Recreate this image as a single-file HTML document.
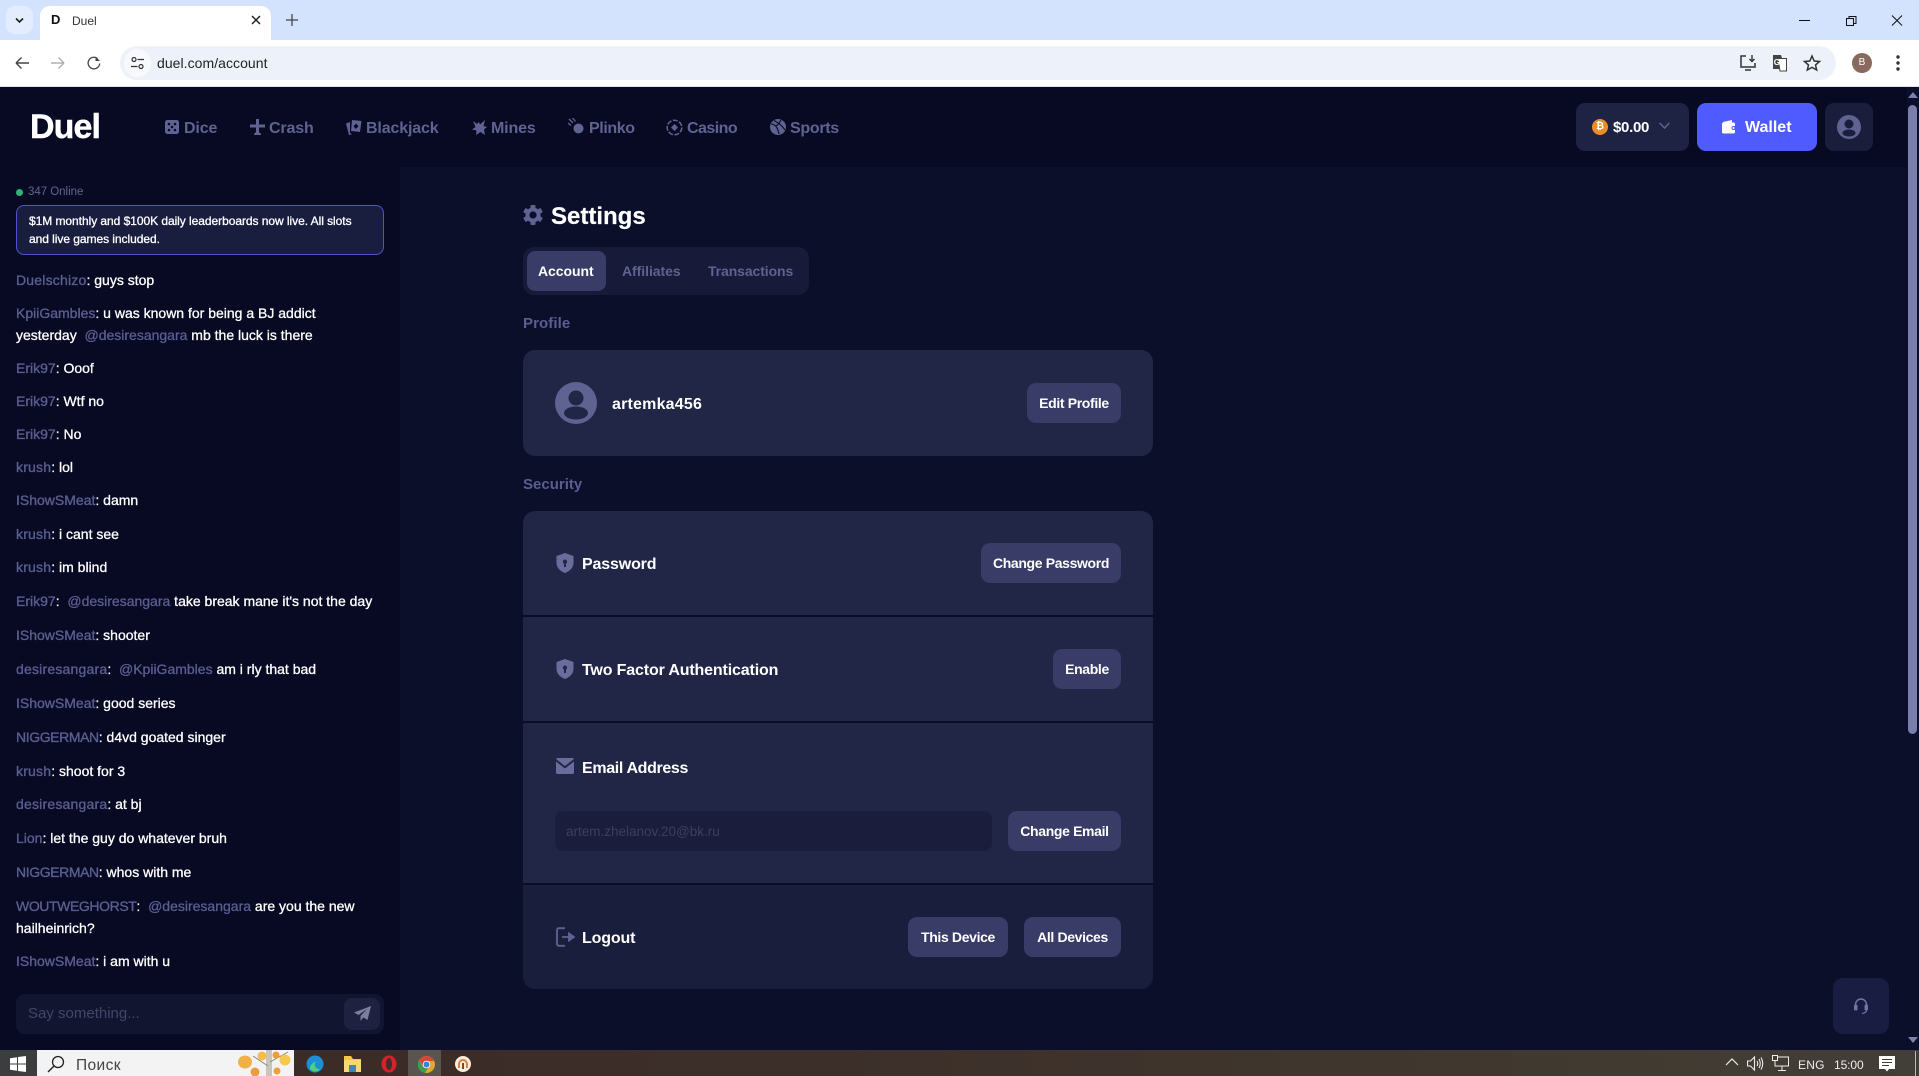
<!DOCTYPE html>
<html lang="en"><head><meta charset="utf-8"><title>Duel</title>
<style>
html,body{margin:0;padding:0;width:1919px;height:1076px;overflow:hidden;background:#070a22;font-family:"Liberation Sans","Noto Sans CJK SC",sans-serif}
div,span.a,svg.a{position:absolute}
.t{position:absolute;white-space:nowrap;line-height:20px;height:20px}
.n{font-size:16px;font-weight:700;color:#5f6391;top:119px;letter-spacing:-.15px}
.b{position:absolute;background:#383c66;border-radius:9px;color:#fff;font-size:14px;font-weight:700;height:40px;line-height:40px;text-align:center;white-space:nowrap;letter-spacing:-.35px}
.l{font-size:16px;font-weight:700;color:#fff;letter-spacing:-.15px}
.m{position:absolute;left:16px;font-size:14px;line-height:20px;color:#fff;white-space:nowrap;font-weight:400;-webkit-text-stroke:.3px #fff}
.m b{font-weight:400;color:#5a5e90;-webkit-text-stroke:.35px #5a5e90}
.m b.u{letter-spacing:-.4px}
.m b.w{letter-spacing:.2px}
.m i{font-style:normal;color:#5a5e90;-webkit-text-stroke:.3px #5a5e90}
</style></head><body>

<!-- browser chrome -->
<div style="left:0;top:0;width:1919px;height:40px;background:#d3e3fd"></div>
<div style="left:6px;top:6px;width:27px;height:28px;background:#e3edfd;border-radius:9px"></div>
<svg class="a" style="left:14px;top:15px" width="11" height="11" viewBox="0 0 11 11"><path d="M2 3.500 5.500 7 9 3.500" fill="none" stroke="#1f1f1f" stroke-width="1.600"/></svg>
<div style="left:40px;top:6px;width:231px;height:36px;background:#fff;border-radius:10px 10px 0 0"></div>
<div class="t" style="left:51px;top:10px;font-size:13px;font-weight:700;color:#111">D</div>
<div class="t" style="left:72px;top:11px;font-size:12px;color:#333">Duel</div>
<svg class="a" style="left:251px;top:15px" width="10" height="10" viewBox="0 0 10 10"><path d="M1 1 9 9M9 1 1 9" stroke="#222" stroke-width="1.500"/></svg>
<svg class="a" style="left:286px;top:14px" width="12" height="12" viewBox="0 0 12 12"><path d="M6 0V12M0 6H12" stroke="#444" stroke-width="1.300"/></svg>
<svg class="a" style="left:1799px;top:15px" width="112" height="12" viewBox="0 0 112 12"><path d="M0 5.500H11" stroke="#111" stroke-width="1"/><path d="M47.500 3.500h7v7h-7zM50 3.500V1.500h7v7h-2.500" fill="none" stroke="#111" stroke-width="1"/><path d="M93 .5 103 10.500M103 .5 93 10.500" stroke="#111" stroke-width="1"/></svg>

<div style="left:0;top:40px;width:1919px;height:47px;background:#fff;border-bottom:1px solid #dfe3ea;box-sizing:border-box"></div>
<div style="left:120px;top:46px;width:1716px;height:34px;background:#edf2fa;border-radius:17px"></div>
<div style="left:124px;top:49px;width:27px;height:28px;background:#f7f9fd;border-radius:14px"></div>
<svg class="a" style="left:14px;top:55px" width="92" height="16" viewBox="0 0 92 16"><path d="M2 8H15M2 8 7.500 2.500M2 8 7.500 13.500" fill="none" stroke="#444" stroke-width="1.400"/><path d="M37 8H50M50 8 44.500 2.500M50 8 44.500 13.500" fill="none" stroke="#b0b0b0" stroke-width="1.400"/><path d="M83.500 3.500a5.800 5.800 0 1 0 2.200 5" fill="none" stroke="#444" stroke-width="1.300"/><path d="M81.500 1.500v4.500h4.500z" fill="#444"/></svg>
<svg class="a" style="left:131px;top:56px" width="13" height="14" viewBox="0 0 13 14"><circle cx="3" cy="3.500" r="2" fill="none" stroke="#333" stroke-width="1.200"/><path d="M6.500 3.500H13M0 10.500H6.500" stroke="#333" stroke-width="1.200"/><circle cx="10" cy="10.500" r="2" fill="none" stroke="#333" stroke-width="1.200"/></svg>
<div class="t" style="left:157px;top:53px;font-size:14px;color:#222;letter-spacing:.05px">duel.com/account</div>
<svg class="a" style="left:1740px;top:54px" width="82" height="18" viewBox="0 0 82 18"><path d="M6 2H1v11h14V9M5 16h6" fill="none" stroke="#333" stroke-width="1.500"/><path d="M12 1v6M9.500 5 12 7.500 14.500 5" fill="none" stroke="#333" stroke-width="1.400"/><path d="M33 1h8l1 3v11H33z" fill="#444"/><path d="M38 4.500h8.500V17H40z" fill="#fff" stroke="#444"/><text x="33.800" y="11" font-size="8" font-family="Liberation Sans" font-weight="700" fill="#fff">G</text><path d="M72 2 74.200 7 79.500 7.500 75.500 11 76.700 16 72 13.400 67.300 16 68.500 11 64.500 7.500 69.800 7z" fill="none" stroke="#333" stroke-width="1.500"/></svg>
<div style="left:1852px;top:53px;width:20px;height:20px;border-radius:10px;background:#8a6a5f;color:#fff;font-size:10px;line-height:20px;text-align:center">B</div>
<svg class="a" style="left:1896px;top:55px" width="4" height="16" viewBox="0 0 4 16"><circle cx="2" cy="2" r="1.700" fill="#333"/><circle cx="2" cy="8" r="1.700" fill="#333"/><circle cx="2" cy="14" r="1.700" fill="#333"/></svg>

<!-- app backgrounds -->
<div style="left:0;top:87px;width:1919px;height:963px;background:#070a22"></div>
<div style="left:400px;top:167px;width:1507px;height:883px;background:#0b0f2a"></div>
<!-- scrollbar -->
<div style="left:1907px;top:87px;width:12px;height:963px;background:#0b0f2a"></div>
<svg class="a" style="left:1908px;top:92px" width="10" height="6" viewBox="0 0 10 6"><path d="M0 6 5 0 10 6z" fill="#7d80ad"/></svg>
<div style="left:1908px;top:105px;width:9px;height:629px;background:#7a7eab;border-radius:5px"></div>
<svg class="a" style="left:1908px;top:1037px" width="10" height="6" viewBox="0 0 10 6"><path d="M0 0 5 6 10 0z" fill="#7d80ad"/></svg>

<!-- header -->
<div class="t" style="left:30px;top:107px;height:40px;line-height:40px;font-size:34px;font-weight:700;color:#fff;letter-spacing:-.9px;-webkit-text-stroke:.4px #fff">Duel</div>
<svg class="a" style="left:165px;top:120px" width="14" height="14" viewBox="0 0 14 14"><rect width="14" height="14" rx="2.500" fill="#5f6391"/><g fill="#070a22"><circle cx="4" cy="4" r="1.300"/><circle cx="10" cy="4" r="1.300"/><circle cx="7" cy="7" r="1.300"/><circle cx="4" cy="10" r="1.300"/><circle cx="10" cy="10" r="1.300"/></g></svg>
<div class="t n" style="left:184px">Dice</div>
<svg class="a" style="left:250px;top:119px" width="15" height="16" viewBox="0 0 15 16"><path d="M6 0h3v5.500h6V8.500H9V13l2 2v1H4v-1l2-2V8.500H0V5.500h6z" fill="#5f6391"/></svg>
<div class="t n" style="left:269px">Crash</div>
<svg class="a" style="left:346px;top:119px" width="16" height="16" viewBox="0 0 16 16"><path d="M0 4.500 4 3v11l2 1.500-3 .5z" fill="#5f6391"/><path d="M6 1 15.500 2 14 13 5 12z" fill="#5f6391"/><path d="M10.300 4.500 12.500 7.500 9.500 10 7.500 7z" fill="#070a22"/></svg>
<div class="t n" style="left:366px">Blackjack</div>
<svg class="a" style="left:472px;top:120px" width="15" height="15" viewBox="0 0 15 15"><path d="M1 1 5 4 7 2 8 4.500 13 0 11.500 6 15 7 12 9.500 13 15 8.500 12 4 15 4.500 10.500 0 9.500 3.500 7z" fill="#5f6391"/></svg>
<div class="t n" style="left:491px">Mines</div>
<svg class="a" style="left:568px;top:118px" width="16" height="16" viewBox="0 0 16 16"><circle cx="10.500" cy="10.500" r="5" fill="#5f6391"/><path d="M1 1 5 5M4.500 0 7.500 3.500M0 5 3 7.500" stroke="#5f6391" stroke-width="1.300"/></svg>
<div class="t n" style="left:589px;letter-spacing:-.4px">Plinko</div>
<svg class="a" style="left:666px;top:119px" width="17" height="17" viewBox="0 0 17 17"><circle cx="8.500" cy="8.500" r="7.300" fill="none" stroke="#5f6391" stroke-width="1.500" stroke-dasharray="5 1.500"/><path d="M8.500 5 12 8.500 8.500 12 5 8.500z" fill="#5f6391"/></svg>
<div class="t n" style="left:687px;letter-spacing:-.55px">Casino</div>
<svg class="a" style="left:770px;top:119px" width="16" height="16" viewBox="0 0 16 16"><circle cx="8" cy="8" r="8" fill="#5f6391"/><path d="M1 5Q7 5 9 15M4 1.500Q11 5 15 11M11 1Q9 5 6 7" fill="none" stroke="#070a22" stroke-width="1.100"/></svg>
<div class="t n" style="left:790px;letter-spacing:-.3px">Sports</div>

<div style="left:1576px;top:103px;width:113px;height:48px;background:#1f2343;border-radius:9px"></div>
<div style="left:1592px;top:119px;width:16px;height:16px;border-radius:8px;background:#e88d2a;color:#fff;font-size:10px;line-height:16px;text-align:center;font-weight:700">₿</div>
<div class="t" style="left:1613px;top:118px;font-size:15px;font-weight:700;color:#fff;letter-spacing:-.3px">$0.00</div>
<svg class="a" style="left:1659px;top:122px" width="11" height="8" viewBox="0 0 11 8"><path d="M.7 1 5.500 6 10.300 1" fill="none" stroke="#5f6391" stroke-width="1.500"/></svg>
<div style="left:1697px;top:103px;width:120px;height:48px;background:#4f5bff;border-radius:9px"></div>
<svg class="a" style="left:1721px;top:120px" width="16" height="14" viewBox="0 0 16 14"><path d="M2 2 11 0v2.500H2z" fill="#fff"/><rect x="1" y="2.500" width="13" height="11" rx="1.500" fill="#fff"/><rect x="10.500" y="6" width="5.500" height="4" rx="2" fill="#4f5bff"/><circle cx="12.500" cy="8" r="1" fill="#fff"/></svg>
<div class="t" style="left:1745px;top:118px;font-size:16px;font-weight:700;color:#fff">Wallet</div>
<div style="left:1825px;top:103px;width:48px;height:48px;background:#1a1e3c;border-radius:9px"></div>
<svg class="a" style="left:1837px;top:115px" width="24" height="24" viewBox="0 0 24 24"><circle cx="12" cy="12" r="12" fill="#5f6391"/><circle cx="12" cy="9" r="4.500" fill="#1a1e3c"/><ellipse cx="12" cy="18" rx="6.500" ry="3.500" fill="#1a1e3c"/></svg>

<!-- chat -->
<div style="left:16px;top:188.500px;width:7px;height:7px;border-radius:4px;background:#2fb37a"></div>
<div class="t" style="left:28px;top:182px;font-size:11.500px;color:#62668f;letter-spacing:-.03px">347 Online</div>
<div style="left:16px;top:205px;width:368px;height:50px;box-sizing:border-box;background:#1a1e3e;border:1px solid #4c55cf;border-radius:8px"></div>
<div class="t" style="left:29px;top:211px;font-size:12px;color:#fff;-webkit-text-stroke:.3px #fff;letter-spacing:-.05px">$1M monthly and $100K daily leaderboards now live. All slots</div>
<div class="t" style="left:29px;top:229px;font-size:12px;color:#fff;-webkit-text-stroke:.3px #fff;letter-spacing:-.05px">and live games included.</div>

<div class="m" style="top:270px"><b class="w">Duelschizo</b>: guys stop</div>
<div class="m" style="top:303px"><b>KpiiGambles</b>: u was known for being a BJ addict</div>
<div class="m" style="top:325px">yesterday &nbsp;<i>@desiresangara</i> mb the luck is there</div>
<div class="m" style="top:358px"><b>Erik97</b>: Ooof</div>
<div class="m" style="top:391px"><b>Erik97</b>: Wtf no</div>
<div class="m" style="top:424px"><b>Erik97</b>: No</div>
<div class="m" style="top:457px"><b class="w">krush</b>: lol</div>
<div class="m" style="top:490px"><b>IShowSMeat</b>: damn</div>
<div class="m" style="top:524px"><b class="w">krush</b>: i cant see</div>
<div class="m" style="top:557px"><b class="w">krush</b>: im blind</div>
<div class="m" style="top:591px"><b>Erik97</b>: &nbsp;<i>@desiresangara</i> take break mane it's not the day</div>
<div class="m" style="top:625px"><b>IShowSMeat</b>: shooter</div>
<div class="m" style="top:659px"><b class="w">desiresangara</b>: &nbsp;<i>@KpiiGambles</i> am i rly that bad</div>
<div class="m" style="top:693px"><b>IShowSMeat</b>: good series</div>
<div class="m" style="top:727px"><b class="u">NIGGERMAN</b>: d4vd goated singer</div>
<div class="m" style="top:761px"><b class="w">krush</b>: shoot for 3</div>
<div class="m" style="top:794px"><b class="w">desiresangara</b>: at bj</div>
<div class="m" style="top:828px"><b>Lion</b>: let the guy do whatever bruh</div>
<div class="m" style="top:862px"><b class="u">NIGGERMAN</b>: whos with me</div>
<div class="m" style="top:896px"><b class="u">WOUTWEGHORST</b>: &nbsp;<i>@desiresangara</i> are you the new</div>
<div class="m" style="top:918px">hailheinrich?</div>
<div class="m" style="top:951px"><b>IShowSMeat</b>: i am with u</div>

<div style="left:16px;top:994px;width:368px;height:40px;background:#12152f;border-radius:9px"></div>
<div class="t" style="left:28px;top:1004px;font-size:15px;color:#42456a">Say something...</div>
<div style="left:344px;top:998px;width:36px;height:32px;background:#1e2240;border-radius:8px"></div>
<svg class="a" style="left:354px;top:1006px" width="17" height="15" viewBox="0 0 17 15"><path d="M17 0 0 6.500 4.500 9 13 3 6.500 10V15L9.300 11.500 13.500 14z" fill="#7c7fa0"/></svg>

<!-- settings -->
<svg class="a" style="left:523px;top:205px" width="20" height="20" viewBox="0 0 20 20"><g fill="#5f6391"><circle cx="10" cy="10" r="7.500"/><rect x="7.500" y="0" width="5" height="20" rx="1"/><rect x="7.500" y="0" width="5" height="20" rx="1" transform="rotate(60 10 10)"/><rect x="7.500" y="0" width="5" height="20" rx="1" transform="rotate(120 10 10)"/></g><circle cx="10" cy="10" r="3.600" fill="#0b0f2a"/></svg>
<div class="t" style="left:551px;top:204.500px;height:24px;line-height:24px;font-size:24px;font-weight:700;color:#fff;-webkit-text-stroke:.2px #fff">Settings</div>
<div style="left:523px;top:247px;width:286px;height:48px;background:#171a38;border-radius:11px"></div>
<div style="left:527px;top:251px;width:79px;height:40px;background:#383c66;border-radius:8px"></div>
<div class="t" style="left:538px;top:261px;font-size:14px;font-weight:700;color:#fff;letter-spacing:-.05px">Account</div>
<div class="t" style="left:622px;top:261px;font-size:14px;font-weight:700;color:#5f6391;letter-spacing:-.05px">Affiliates</div>
<div class="t" style="left:708px;top:261px;font-size:14px;font-weight:700;color:#5f6391;letter-spacing:-.1px">Transactions</div>

<div class="t" style="left:523px;top:314px;font-size:15px;font-weight:700;color:#5a5e90;letter-spacing:.1px">Profile</div>
<div style="left:523px;top:350px;width:630px;height:106px;background:#212546;border-radius:12px"></div>
<svg class="a" style="left:555px;top:382px" width="42" height="42" viewBox="0 0 42 42"><circle cx="21" cy="21" r="21" fill="#5f6391"/><circle cx="21" cy="16" r="7.500" fill="#212546"/><ellipse cx="21" cy="31" rx="12" ry="6.500" fill="#212546"/></svg>
<div class="t l" style="left:612px;top:395px;letter-spacing:.2px">artemka456</div>
<div class="b" style="left:1027px;top:383px;width:94px">Edit Profile</div>

<div class="t" style="left:523px;top:475px;font-size:15px;font-weight:700;color:#5a5e90">Security</div>
<div style="left:523px;top:511px;width:630px;height:478px;background:#0a0d28;border-radius:12px;overflow:hidden">
  <div style="left:0;top:0;width:630px;height:104px;background:#212546"></div>
  <div style="left:0;top:106px;width:630px;height:104px;background:#212546"></div>
  <div style="left:0;top:212px;width:630px;height:160px;background:#212546"></div>
  <div style="left:0;top:374px;width:630px;height:104px;background:#1a1e3d"></div>
</div>
<svg class="a" style="left:556px;top:553px" width="18" height="20" viewBox="0 0 18 20"><path fill="#6a6d9b" fill-rule="evenodd" d="M9 0 17.500 3V10C17.500 15 13 18.500 9 20 5 18.500.5 15 .5 10V3zM9 6.500a2.200 2.200 0 0 0-1 4.100V14h2v-3.400a2.200 2.200 0 0 0-1-4.100z"/></svg>
<div class="t l" style="left:582px;top:555px">Password</div>
<div class="b" style="left:981px;top:543px;width:140px">Change Password</div>
<svg class="a" style="left:556px;top:659px" width="18" height="20" viewBox="0 0 18 20"><path fill="#6a6d9b" fill-rule="evenodd" d="M9 0 17.500 3V10C17.500 15 13 18.500 9 20 5 18.500.5 15 .5 10V3zM9 6.500a2.200 2.200 0 0 0-1 4.100V14h2v-3.400a2.200 2.200 0 0 0-1-4.100z"/></svg>
<div class="t l" style="left:582px;top:661px">Two Factor Authentication</div>
<div class="b" style="left:1053px;top:649px;width:68px">Enable</div>
<svg class="a" style="left:556px;top:758px" width="18" height="16" viewBox="0 0 18 16"><path fill="#6a6d9b" d="M0 1 1 0H17L18 1 9 8zM0 3.500 9 10.500 18 3.500V15L17 16H1L0 15z"/></svg>
<div class="t l" style="left:582px;top:759px;letter-spacing:-.35px">Email Address</div>
<div style="left:555px;top:811px;width:437px;height:40px;background:#1a1e3c;border-radius:8px"></div>
<div class="t" style="left:566px;top:822px;font-size:13.500px;color:#3c3f62">artem.zhelanov.20@bk.ru</div>
<div class="b" style="left:1008px;top:811px;width:113px">Change Email</div>
<svg class="a" style="left:556px;top:927px" width="19" height="20" viewBox="0 0 19 20"><path d="M9 1.200H3Q1 1.200 1 3V17Q1 18.800 3 18.800H9" fill="none" stroke="#5f6391" stroke-width="1.800"/><path d="M6 10H16M13 6.500 18 10 13 13.500z" stroke="#5f6391" stroke-width="1.800" fill="#5f6391"/></svg>
<div class="t l" style="left:582px;top:929px">Logout</div>
<div class="b" style="left:908px;top:917px;width:100px">This Device</div>
<div class="b" style="left:1024px;top:917px;width:97px">All Devices</div>

<div style="left:1833px;top:978px;width:56px;height:56px;background:#1a1d42;border-radius:10px"></div>
<svg class="a" style="left:1854px;top:998px" width="14" height="17" viewBox="0 0 14 17"><path d="M1.500 9V6.500a5.500 5.500 0 0 1 11 0V9" fill="none" stroke="#7275a5" stroke-width="1.400"/><rect x="0" y="6.500" width="3.500" height="6" rx="1.500" fill="#7275a5"/><rect x="10.500" y="6.500" width="3.500" height="6" rx="1.500" fill="#7275a5"/><path d="M12.500 12.500Q12 15 8 15.500" fill="none" stroke="#7275a5" stroke-width="1.200"/></svg>

<!-- taskbar -->
<div style="left:0;top:1050px;width:1919px;height:26px;background:linear-gradient(90deg,#3a2a26 0%,#3c2e29 40%,#40392f 80%,#423e38 100%)"></div>
<div style="left:0;top:1050px;width:37px;height:26px;background:#3c3d3e"></div>
<svg class="a" style="left:10px;top:1056px" width="16" height="16" viewBox="0 0 16 16"><path fill="#fff" d="M0 2.200 7 1.200V7.500H0zM8 1 16 0V7.500H8zM0 8.500H7V14.800L0 13.800zM8 8.500H16V16L8 15z"/></svg>
<div style="left:37px;top:1050px;width:257px;height:26px;background:#f3f3f3"></div>
<svg class="a" style="left:47px;top:1055px" width="18" height="18" viewBox="0 0 18 18"><circle cx="11" cy="7" r="5.500" fill="none" stroke="#222" stroke-width="1.300"/><path d="M7 11 1 17" stroke="#222" stroke-width="1.400"/></svg>
<div class="t" style="left:76px;top:1056px;font-size:15.500px;color:#444;letter-spacing:.4px">Поиск</div>
<svg class="a" style="left:238px;top:1050px" width="55" height="26" viewBox="0 0 55 26"><rect x="28" y="0" width="6" height="26" fill="#c9c5bd"/><path d="M32 12 50 2M15 6 30 16" stroke="#8f8778" stroke-width="1"/><ellipse cx="7" cy="12" rx="7" ry="6.500" fill="#f2b048"/><circle cx="24" cy="6" r="4.500" fill="#f5bd4a"/><circle cx="38" cy="5" r="3.500" fill="#ee9c33"/><circle cx="47" cy="10" r="5.500" fill="#f6c84f"/><circle cx="17" cy="22" r="4.500" fill="#ec9c40"/><circle cx="39" cy="21" r="3.500" fill="#eda037"/></svg>
<svg class="a" style="left:306px;top:1055px" width="18" height="18" viewBox="0 0 18 18"><circle cx="9" cy="9" r="8.500" fill="#1c8fd6"/><path d="M4 12Q7 5 13 8 11 6.500 9 8 8 14 14 14 11 17.500 7 16 3.500 15 4 12z" fill="#4fd181"/></svg>
<svg class="a" style="left:344px;top:1055px" width="17" height="17" viewBox="0 0 17 17"><path fill="#f5c644" d="M0 1H7L9 4H17V9H0z"/><rect y="5" width="17" height="12" fill="#f8d775"/><rect x="5" y="10" width="7" height="7" fill="#3c88b8"/></svg>
<svg class="a" style="left:381px;top:1055px" width="16" height="18" viewBox="0 0 16 18"><ellipse cx="8" cy="9" rx="7.500" ry="8.500" fill="#d8202a"/><ellipse cx="8" cy="9" rx="3" ry="6" fill="#3c2e29"/></svg>
<div style="left:408px;top:1050px;width:33px;height:26px;background:#5a5450"></div>
<svg class="a" style="left:418px;top:1056px" width="17" height="17" viewBox="0 0 17 17"><circle cx="8.500" cy="8.500" r="8.500" fill="#e0a82e"/><path d="M8.500 0A8.500 8.500 0 0 0 1.200 4L5 10 8.500 5H16A8.500 8.500 0 0 0 8.500 0z" fill="#d6453a"/><path d="M1.200 4A8.500 8.500 0 0 0 7 17L10.500 11H5z" fill="#3d9d50"/><circle cx="8.500" cy="8.500" r="3.800" fill="#fff"/><circle cx="8.500" cy="8.500" r="3" fill="#3d7ee0"/></svg>
<svg class="a" style="left:455px;top:1056px" width="16" height="16" viewBox="0 0 16 16"><circle cx="8" cy="8" r="8" fill="#f6ece0"/><path d="M3 12V8a5 5 0 0 1 10 0v4h-2V8a3 3 0 0 0-6 0v4z" fill="#d9823a"/><rect x="7" y="7" width="2" height="6" fill="#7a4a2a"/></svg>

<svg class="a" style="left:1725px;top:1057px" width="14" height="10" viewBox="0 0 14 10"><path d="M1 8 7 2 13 8" fill="none" stroke="#eee" stroke-width="1.200"/></svg>
<svg class="a" style="left:1747px;top:1055px" width="17" height="17" viewBox="0 0 17 17"><path d="M.5 6H3.500L7.500 2V15L3.500 11H.5z" fill="none" stroke="#eee" stroke-width="1.100"/><path d="M10 6Q11.500 8.500 10 11M12 4Q14.500 8.500 12 13M14 2.500Q17.500 8.500 14 14.500" fill="none" stroke="#eee" stroke-width="1.100"/></svg>
<svg class="a" style="left:1772px;top:1055px" width="17" height="17" viewBox="0 0 17 17"><path d="M5 2H16.500V11H4M10 11V15M6 15.500H14" fill="none" stroke="#eee" stroke-width="1"/><rect x=".5" y=".5" width="5" height="5" fill="#403a30" stroke="#eee"/><path d="M3 5.500V11H4" fill="none" stroke="#eee"/></svg>
<div class="t" style="left:1798px;top:1055px;font-size:12px;color:#eee;letter-spacing:.2px">ENG</div>
<div class="t" style="left:1834px;top:1055px;font-size:12px;color:#eee;letter-spacing:-.1px">15:00</div>
<svg class="a" style="left:1879px;top:1056px" width="16" height="17" viewBox="0 0 16 17"><path fill="#fff" d="M0 0H16V13H10L8 15.500 6 13H0z"/><path d="M3 3.500H13M3 6.500H13M3 9.500H10" stroke="#403a30" stroke-width="1"/></svg>
<div style="left:1915px;top:1051px;width:1px;height:25px;background:#bbb"></div>
</body></html>
